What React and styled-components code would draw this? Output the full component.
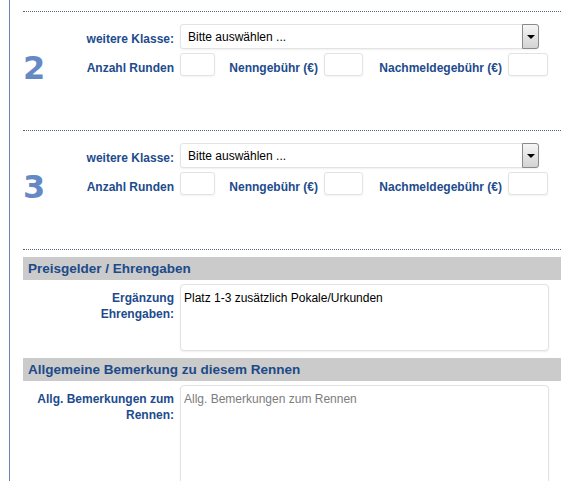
import styled, { createGlobalStyle } from "styled-components";

const GlobalStyle = createGlobalStyle`
  html, body {
    margin: 0;
    padding: 0;
    overflow: hidden;
    background: #fff;
  }
  body {
    font-family: "Liberation Sans", Arial, sans-serif;
    font-size: 12px;
    color: #000;
  }
`;

const Page = styled.div`
  margin-left: 9px;
  border-left: 1px solid #6b84ab;
  min-height: 100vh;
  padding: 11px 9px 0 13px;
  box-sizing: border-box;
`;

const Sections = styled.div`
  border-bottom: 1px dotted #55657c;
`;

const NumberedSection = styled.section`
  display: flex;
  border-top: 1px dotted #55657c;
  padding: 12px 0 46px;
`;

const Number = styled.div`
  width: 50px;
  flex-shrink: 0;
  margin-top: 28px;
  font-family: "DejaVu Sans", "Liberation Sans", sans-serif;
  font-weight: bold;
  font-size: 32px;
  line-height: 32px;
  height: 32px;
  color: #6489c4;
`;

const Fields = styled.div`
  display: flex;
  flex-direction: column;
  gap: 4px;
`;

const Row = styled.div`
  display: flex;
  align-items: flex-end;
  gap: 6px;
`;

const Label = styled.label`
  display: flex;
  justify-content: flex-end;
  flex-shrink: 0;
  width: ${(p) => p.$w}px;
  padding-bottom: ${(p) => p.$pb || 0}px;
  font-weight: bold;
  font-size: 12px;
  line-height: 16px;
  color: #1d4b8d;
  white-space: nowrap;
  text-align: right;
`;

const SelectWrap = styled.div`
  position: relative;
  width: 359px;
  height: 25px;
`;

const Select = styled.select`
  appearance: none;
  width: 100%;
  height: 100%;
  box-sizing: border-box;
  border: 1px solid #e3e3e3;
  border-radius: 3px;
  box-shadow: 0 1px 2px rgba(0, 0, 0, 0.06);
  background: #fff;
  padding: 0 20px 0 7px;
  font-family: "Liberation Sans", Arial, sans-serif;
  font-size: 12px;
  color: #000;
  outline: none;
`;

const ArrowButton = styled.span`
  position: absolute;
  top: 0;
  right: 0;
  bottom: 0;
  width: 17px;
  box-sizing: border-box;
  border: 1px solid #8a8a8a;
  border-radius: 0 3px 3px 0;
  background: linear-gradient(#f6f6f6, #d3d3d3);
  display: flex;
  align-items: center;
  justify-content: center;
  pointer-events: none;

  &::after {
    content: "";
    border-left: 4px solid transparent;
    border-right: 4px solid transparent;
    border-top: 4px solid #000;
  }
`;

const SmallInput = styled.input`
  width: ${(p) => p.$w}px;
  height: 23px;
  box-sizing: border-box;
  border: 1px solid #e3e3e3;
  border-radius: 3px;
  box-shadow: 0 1px 2px rgba(0, 0, 0, 0.05);
  background: #fff;
  flex-shrink: 0;
  outline: none;
`;

const PanelHeader = styled.h3`
  margin: 7px 0 0;
  height: 23px;
  line-height: 23px;
  padding-left: 5px;
  background: #cbcbcb;
  font-size: 13.5px;
  font-weight: bold;
  color: #1c4a89;
`;

const FieldRow = styled.div`
  display: flex;
  align-items: flex-start;
  gap: 6px;
  margin-top: 4px;
  padding-left: 14px;
`;

const AreaLabel = styled.label`
  width: 137px;
  flex-shrink: 0;
  padding-top: 6px;
  text-align: right;
  font-weight: bold;
  font-size: 12px;
  line-height: 16px;
  color: #1d4b8d;
`;

const TextArea = styled.textarea`
  width: 369px;
  height: ${(p) => p.$h}px;
  box-sizing: border-box;
  border: 1px solid #e2e2e2;
  border-radius: 4px;
  box-shadow: 0 1px 2px rgba(0, 0, 0, 0.07);
  padding: 5px 3px;
  resize: none;
  font-family: "Liberation Sans", Arial, sans-serif;
  font-size: 12px;
  line-height: 16px;
  color: #000;
  outline: none;

  &::placeholder {
    color: #7d7d7d;
  }
`;

function ClassSection({ num }) {
  return (
    <NumberedSection>
      <Number>{num}</Number>
      <Fields>
        <Row>
          <Label $w={101} $pb={2}>weitere Klasse:</Label>
          <SelectWrap>
            <Select defaultValue="">
              <option value="">Bitte auswählen ...</option>
            </Select>
            <ArrowButton />
          </SelectWrap>
        </Row>
        <Row>
          <Label $w={101}>Anzahl Runden</Label>
          <SmallInput $w={35} />
          <Label $w={97}>Nenngebühr (€)</Label>
          <SmallInput $w={39} />
          <Label $w={133}>Nachmeldegebühr (€)</Label>
          <SmallInput $w={40} />
        </Row>
      </Fields>
    </NumberedSection>
  );
}

export default function App() {
  return (
    <>
      <GlobalStyle />
      <Page>
        <Sections>
          <ClassSection num="2" />
          <ClassSection num="3" />
        </Sections>

        <PanelHeader>Preisgelder / Ehrengaben</PanelHeader>
        <FieldRow>
          <AreaLabel>Ergänzung Ehrengaben:</AreaLabel>
          <TextArea $h={67} defaultValue="Platz 1-3 zusätzlich Pokale/Urkunden" />
        </FieldRow>

        <PanelHeader>Allgemeine Bemerkung zu diesem Rennen</PanelHeader>
        <FieldRow>
          <AreaLabel>Allg. Bemerkungen zum Rennen:</AreaLabel>
          <TextArea $h={110} placeholder="Allg. Bemerkungen zum Rennen" />
        </FieldRow>
      </Page>
    </>
  );
}
